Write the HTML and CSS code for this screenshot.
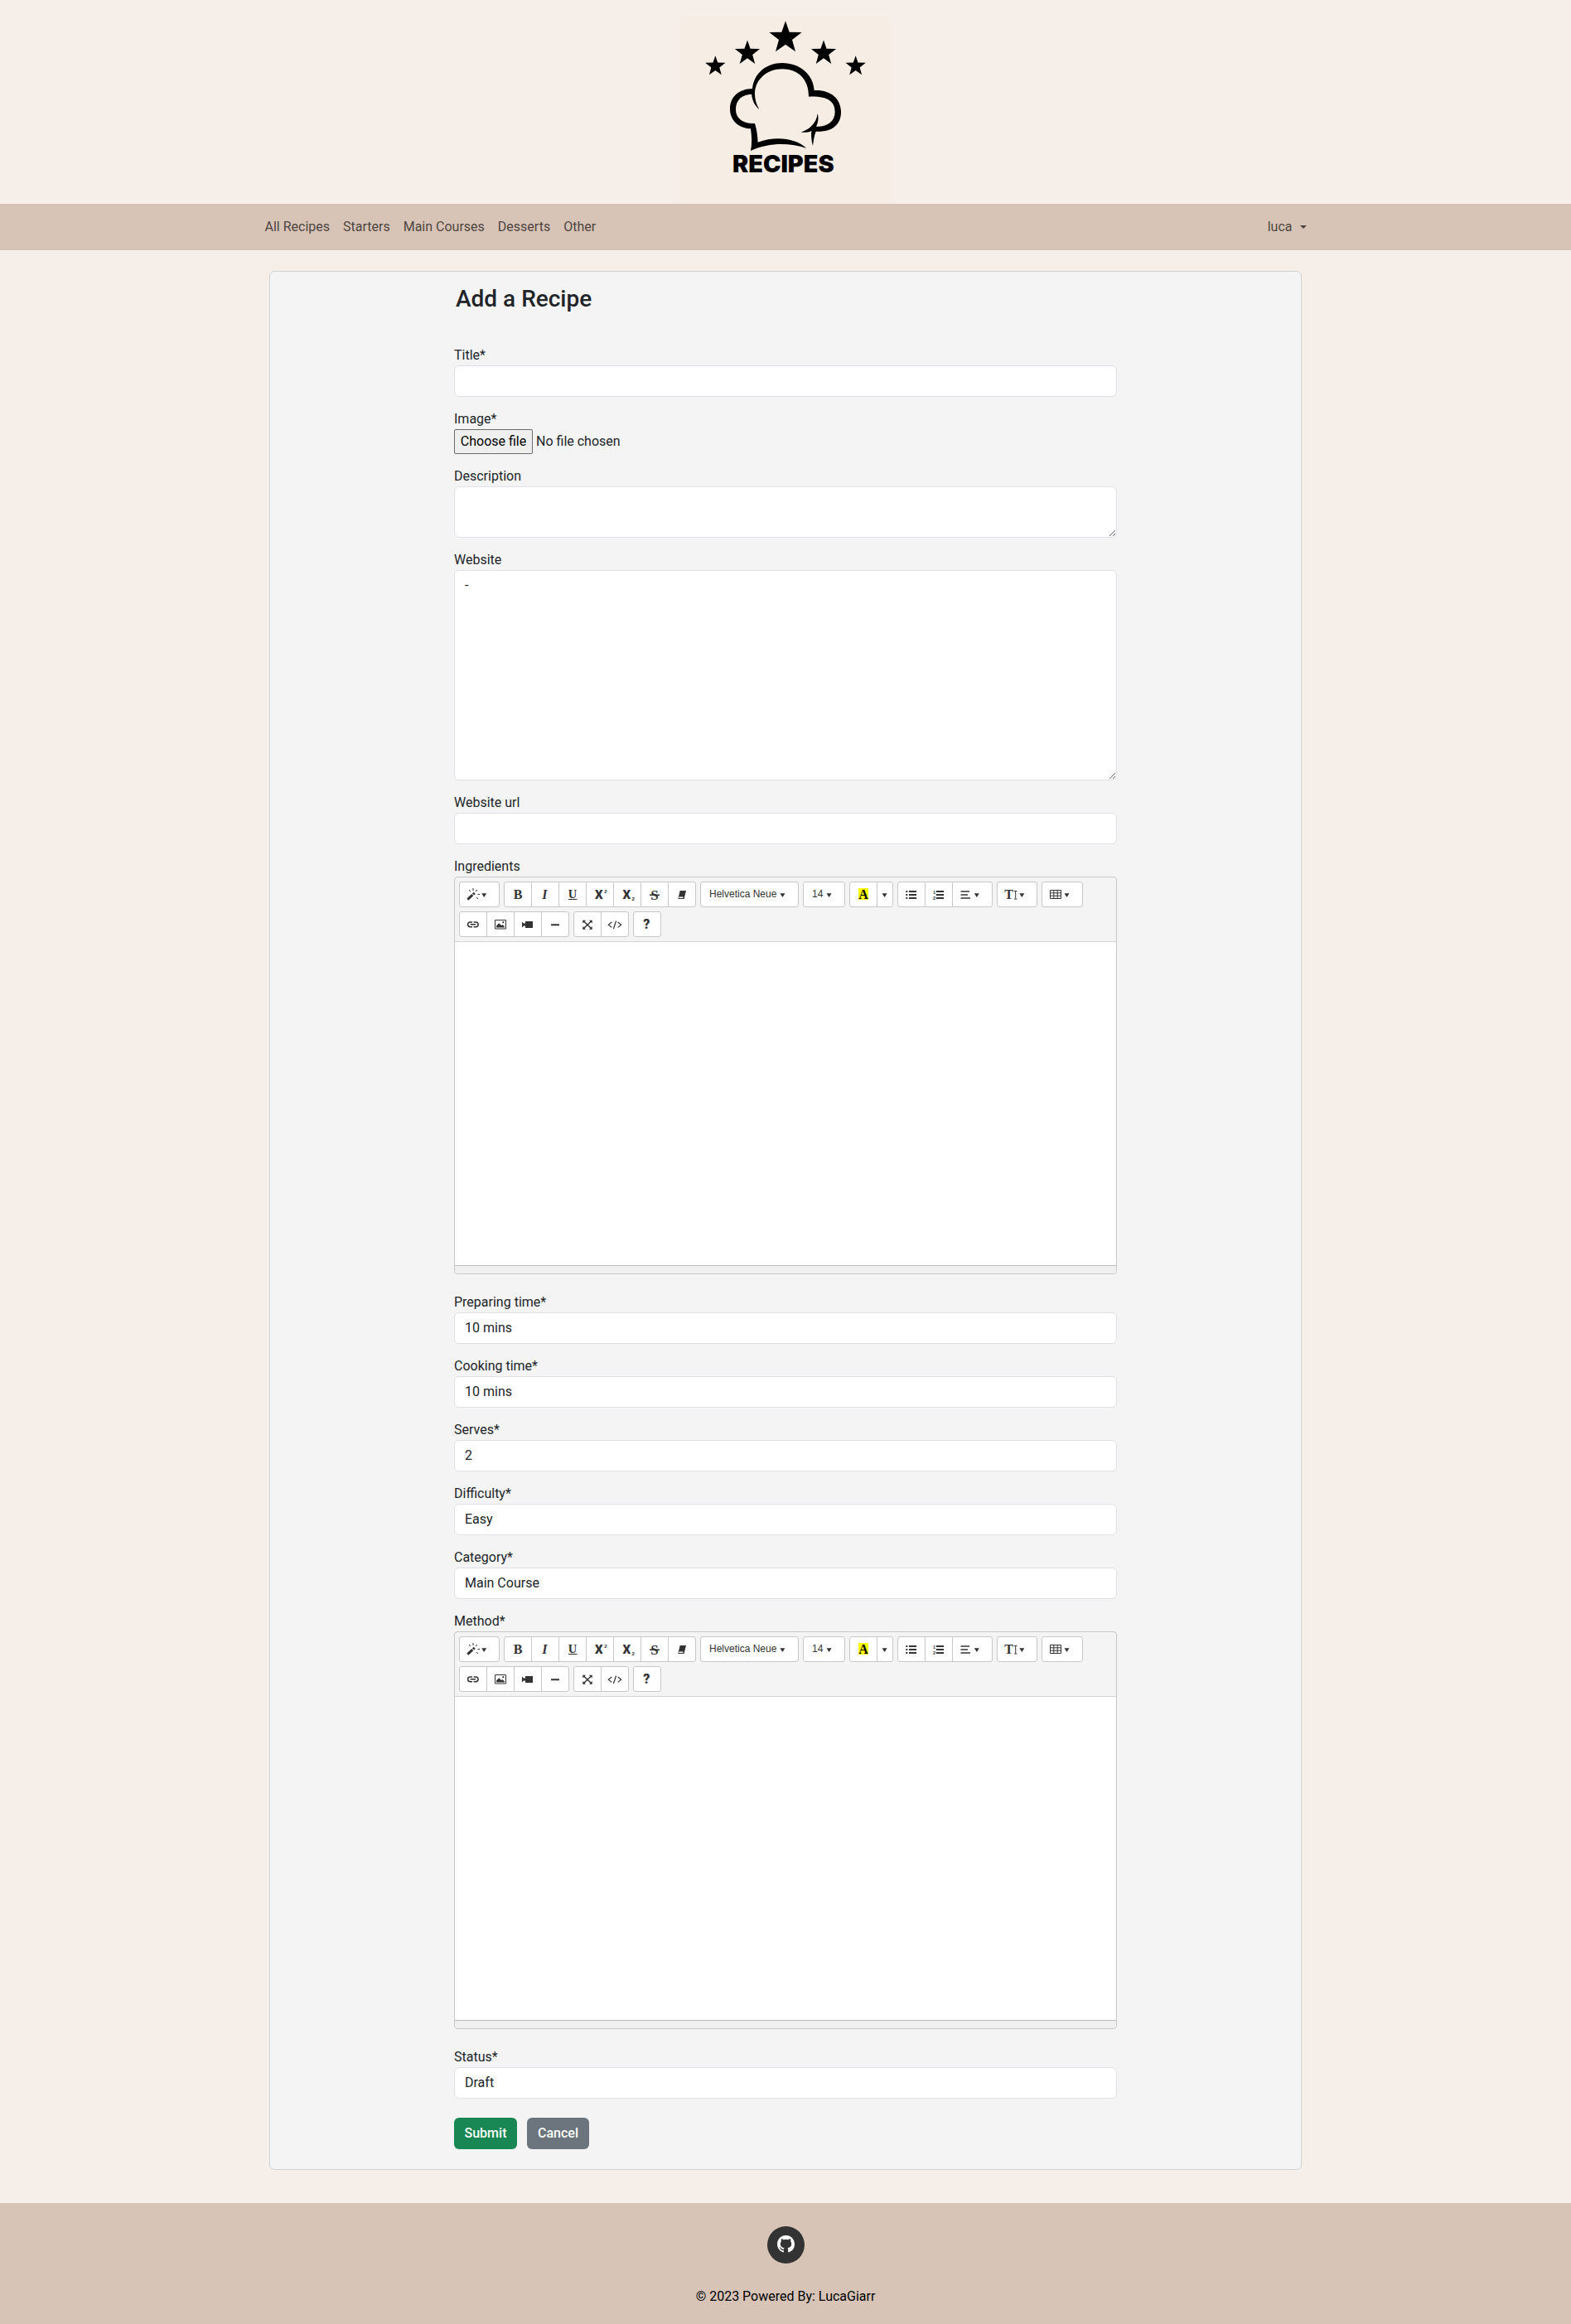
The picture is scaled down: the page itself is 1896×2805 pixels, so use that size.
FILE: index.html
```html
<!DOCTYPE html>
<html lang="en">
<head>
<meta charset="utf-8">
<title>Add a Recipe</title>
<link rel="stylesheet" href="styles.css">
</head>
<body>
<header class="site-header">
  <svg class="logo" viewBox="-6 0 780 738" role="img" aria-label="Recipes">
    <rect class="logo-bg" x="7" y="63" width="753" height="675"/>
    <defs><path id="star" d="M0-58 14-18 59-17 24 10 36 53 0 27-36 53-24 10-59-17-14-18Z"/></defs>
    <use href="#star" transform="translate(384 134)"/>
    <use href="#star" transform="translate(246 190) scale(.77)"/>
    <use href="#star" transform="translate(522 190) scale(.77)"/>
    <use href="#star" transform="translate(130 238) scale(.62)"/>
    <use href="#star" transform="translate(638 238) scale(.62)"/>
    <path d="M264 321C270 265 314 228 372 228C436 228 485 270 488 327C546 324 585 356 585 406C585 456 546 480 494 476C488 490 486 506 483 528C478 510 476 492 478 474C466 480 455 480 440 479C472 468 496 446 500 411C505 428 502 444 495 458C535 460 563 440 563 405C563 366 535 347 468 350C468 286 430 250 372 250C316 250 272 290 273 341C274 364 280 380 289 395C272 383 264 364 261 341C226 342 204 362 204 396C204 428 228 449 273 447C280 469 283 492 284 515C350 492 420 500 460 537C400 517 326 515 258 546C263 520 262 494 258 466C212 464 183 434 183 395C183 350 216 322 264 321Z"/>
    <text x="192" y="624" textLength="368" lengthAdjust="spacingAndGlyphs">RECIPES</text>
  </svg>
</header>

<nav class="navbar">
  <div class="nav-inner">
    <div class="nav-links"><a>All Recipes</a><a>Starters</a><a>Main Courses</a><a>Desserts</a><a>Other</a></div>
    <a class="user-menu">luca<span class="caret"></span></a>
  </div>
</nav>

<svg class="sprite" aria-hidden="true">
  <defs>
    <g id="caret"><path d="M-.2 0H5.8L2.8 4.6Z"/></g>
    <g id="toolbar-wand"><path d="M10.3 21.7 16.3 16.2" class="w3"/><path d="M17 15.5 18.8 13.8" class="w3"/><path d="M17 8V11M12 10 14 12M22 10 20 12M22.5 15.5H25M21 19 23 21" class="w1"/><use href="#caret" x="27.4" y="14.3"/></g>
    <g id="toolbar-bold"><text class="serif" x="11.7" y="21.3" font-size="16">B</text></g>
    <g id="toolbar-italic"><text class="serif italic" x="13.2" y="21.3" font-size="16">I</text></g>
    <g id="toolbar-underline"><text class="serif" x="11.7" y="19.5" font-size="14.5">U</text><path class="w1" d="M12 21.5H22.5"/></g>
    <g id="toolbar-sup"><text class="sans heavy" x="11" y="21" font-size="15">X</text><text class="sans" x="22.3" y="14" font-size="6">2</text></g>
    <g id="toolbar-sub"><text class="sans heavy" x="11.6" y="21" font-size="15">X</text><text class="sans" x="22.5" y="23" font-size="6">2</text></g>
    <g id="toolbar-strike"><text class="serif" x="12.2" y="21.6" font-size="17">S</text><path class="w15" d="M11 16.2H23"/></g>
    <g id="toolbar-eraser"><path d="M14.7 11H22L19.6 21H12.3Z"/><path d="M13.5 18.5H18.7L18.3 20H13.2Z" fill="#fff"/></g>
    <g id="toolbar-font"><text class="label" x="11" y="19">Helvetica Neue</text><use href="#caret" x="96.6" y="14.3"/></g>
    <g id="toolbar-size"><text class="label" x="11" y="19">14</text><use href="#caret" x="28.8" y="14.3"/></g>
    <g id="toolbar-color"><rect x="11" y="8" width="12" height="14" fill="#ff0"/><text class="serif black" x="11.2" y="21.3" font-size="16">A</text></g>
    <g id="toolbar-more"><use href="#caret" x="6.8" y="14.3"/></g>
    <g id="toolbar-ul"><path class="w2" d="M14 12H23M14 16H23M14 20H23M10.3 12H12.3M10.3 16H12.3M10.3 20H12.3"/></g>
    <g id="toolbar-ol"><path class="w2" d="M13.8 12H23M13.8 16H23M13.8 20H23"/><text class="sans" x="10" y="15" font-size="5.5">1</text><text class="sans" x="10" y="21.5" font-size="5.5">2</text></g>
    <g id="toolbar-align"><path class="w15" d="M10.5 12H21M10.5 16H19M10.5 20H22"/><use href="#caret" x="27" y="14.3"/></g>
    <g id="toolbar-height"><text class="serif" x="9.2" y="21.2" font-size="16">T</text><path class="w1" d="M22.7 12V20.5M21 11.5H24.4M21 21H24.4"/><use href="#caret" x="27.5" y="14.3"/></g>
    <g id="toolbar-table"><path class="w1" d="M10.5 10.5H23.5V20.5H10.5ZM14.8 10.5V20.5M19.2 10.5V20.5M10.5 13.8H23.5M10.5 17.2H23.5"/><use href="#caret" x="27.7" y="14.3"/></g>
    <g id="toolbar-link"><path class="w15" d="M16 12.9H13.5A2.9 2.9 0 0 0 13.5 18.7H16M17.6 12.9H20.2A2.9 2.9 0 0 1 20.2 18.7H17.6M13.7 15.8H20"/></g>
    <g id="toolbar-picture"><path class="w1" d="M10.5 10.5H23.5V21H10.5Z"/><path d="M12 19.5V17.5L15.2 14.3 18 17 19.5 16 22 18.5V19.5Z"/><circle cx="20.3" cy="13.2" r="1.1"/></g>
    <g id="toolbar-video"><path d="M14 12H23V20H14ZM10 12.5 12 14.5H14V17.5H12L10 19.5Z"/></g>
    <g id="toolbar-line"><path class="w2" d="M12 16.3H22"/></g>
    <g id="toolbar-full"><path class="w15" d="M12 11.5 22 21M22 11.5 12 21"/><path d="M11.3 10.8H15L11.3 14.4ZM22.7 10.8V14.4L19 10.8ZM11.3 21.7V18L15 21.7ZM22.7 21.7H19L22.7 18Z"/></g>
    <g id="toolbar-code"><path class="w12" d="M13.3 13 9.3 16.2 13.3 19.4M20.7 13 24.7 16.2 20.7 19.4M18.6 11.5 15.4 21"/></g>
    <g id="toolbar-help"><text class="sans heavy" x="12.2" y="21.3" font-size="16">?</text></g>
  </defs>
</svg>

<main class="card">
  <form class="recipe-form">
    <h1>Add a Recipe</h1>
    <div class="field"><label>Title*</label><input class="control" type="text"></div>
    <div class="field"><label>Image*</label><div class="file-row"><button type="button" class="file-button">Choose file</button><span>No file chosen</span></div></div>
    <div class="field"><label>Description</label><textarea class="control" rows="2"></textarea></div>
    <div class="field"><label>Website</label><textarea class="control" rows="10">-</textarea></div>
    <div class="field"><label>Website url</label><input class="control" type="text"></div>
    <div class="field editor-field"><label>Ingredients</label>
      <div class="editor">
        <div class="toolbar">
          <div class="group"><b class="wide"><svg><use href="#toolbar-wand"/></svg></b></div>
          <div class="group"><b><svg><use href="#toolbar-bold"/></svg></b><b><svg><use href="#toolbar-italic"/></svg></b><b><svg><use href="#toolbar-underline"/></svg></b><b><svg><use href="#toolbar-sup"/></svg></b><b><svg><use href="#toolbar-sub"/></svg></b><b><svg><use href="#toolbar-strike"/></svg></b><b><svg><use href="#toolbar-eraser"/></svg></b></div>
          <div class="group"><b class="font"><svg><use href="#toolbar-font"/></svg></b></div>
          <div class="group"><b class="size"><svg><use href="#toolbar-size"/></svg></b></div>
          <div class="group"><b><svg><use href="#toolbar-color"/></svg></b><b class="more"><svg><use href="#toolbar-more"/></svg></b></div>
          <div class="group"><b><svg><use href="#toolbar-ul"/></svg></b><b><svg><use href="#toolbar-ol"/></svg></b><b class="wide"><svg><use href="#toolbar-align"/></svg></b></div>
          <div class="group"><b class="wide"><svg><use href="#toolbar-height"/></svg></b></div>
          <div class="group"><b class="table"><svg><use href="#toolbar-table"/></svg></b></div>
          <div class="group"><b><svg><use href="#toolbar-link"/></svg></b><b><svg><use href="#toolbar-picture"/></svg></b><b><svg><use href="#toolbar-video"/></svg></b><b><svg><use href="#toolbar-line"/></svg></b></div>
          <div class="group"><b><svg><use href="#toolbar-full"/></svg></b><b><svg><use href="#toolbar-code"/></svg></b></div>
          <div class="group"><b><svg><use href="#toolbar-help"/></svg></b></div>
        </div>
        <div class="editable"></div>
        <div class="statusbar"></div>
      </div>
    </div>
    <div class="field"><label>Preparing time*</label><input class="control" type="text" value="10 mins"></div>
    <div class="field"><label>Cooking time*</label><input class="control" type="text" value="10 mins"></div>
    <div class="field"><label>Serves*</label><input class="control" type="text" value="2"></div>
    <div class="field"><label>Difficulty*</label><div class="control">Easy</div></div>
    <div class="field"><label>Category*</label><div class="control">Main Course</div></div>
    <div class="field editor-field"><label>Method*</label>
      <div class="editor">
        <div class="toolbar">
          <div class="group"><b class="wide"><svg><use href="#toolbar-wand"/></svg></b></div>
          <div class="group"><b><svg><use href="#toolbar-bold"/></svg></b><b><svg><use href="#toolbar-italic"/></svg></b><b><svg><use href="#toolbar-underline"/></svg></b><b><svg><use href="#toolbar-sup"/></svg></b><b><svg><use href="#toolbar-sub"/></svg></b><b><svg><use href="#toolbar-strike"/></svg></b><b><svg><use href="#toolbar-eraser"/></svg></b></div>
          <div class="group"><b class="font"><svg><use href="#toolbar-font"/></svg></b></div>
          <div class="group"><b class="size"><svg><use href="#toolbar-size"/></svg></b></div>
          <div class="group"><b><svg><use href="#toolbar-color"/></svg></b><b class="more"><svg><use href="#toolbar-more"/></svg></b></div>
          <div class="group"><b><svg><use href="#toolbar-ul"/></svg></b><b><svg><use href="#toolbar-ol"/></svg></b><b class="wide"><svg><use href="#toolbar-align"/></svg></b></div>
          <div class="group"><b class="wide"><svg><use href="#toolbar-height"/></svg></b></div>
          <div class="group"><b class="table"><svg><use href="#toolbar-table"/></svg></b></div>
          <div class="group"><b><svg><use href="#toolbar-link"/></svg></b><b><svg><use href="#toolbar-picture"/></svg></b><b><svg><use href="#toolbar-video"/></svg></b><b><svg><use href="#toolbar-line"/></svg></b></div>
          <div class="group"><b><svg><use href="#toolbar-full"/></svg></b><b><svg><use href="#toolbar-code"/></svg></b></div>
          <div class="group"><b><svg><use href="#toolbar-help"/></svg></b></div>
        </div>
        <div class="editable"></div>
        <div class="statusbar"></div>
      </div>
    </div>
    <div class="field"><label>Status*</label><div class="control">Draft</div></div>
    <div class="actions"><button type="button" class="btn submit">Submit</button><button type="button" class="btn cancel">Cancel</button></div>
  </form>
</main>

<footer class="site-footer">
  <a class="github" aria-label="GitHub"><svg viewBox="0 0 16 16"><path d="M8 0C3.58 0 0 3.58 0 8c0 3.54 2.29 6.53 5.47 7.59.4.07.55-.17.55-.38 0-.19-.01-.82-.01-1.49-2.01.37-2.53-.49-2.69-.94-.09-.23-.48-.94-.82-1.13-.28-.15-.68-.52-.01-.53.63-.01 1.08.58 1.23.82.72 1.21 1.87.87 2.33.66.07-.52.28-.87.51-1.07-1.78-.2-3.64-.89-3.64-3.95 0-.87.31-1.59.82-2.15-.08-.2-.36-1.02.08-2.12 0 0 .67-.21 2.2.82.64-.18 1.32-.27 2-.27s1.36.09 2 .27c1.53-1.04 2.2-.82 2.2-.82.44 1.1.16 1.92.08 2.12.51.56.82 1.27.82 2.15 0 3.07-1.87 3.75-3.65 3.95.29.25.54.73.54 1.48 0 1.07-.01 1.93-.01 2.2 0 .21.15.46.55.38A8.01 8.01 0 0 0 16 8c0-4.42-3.58-8-8-8Z"/></svg></a>
  <p>© 2023 Powered By: LucaGiarr</p>
</footer>
</body>
</html>
```
FILE: styles.css
```css
* { box-sizing: border-box; }
body { margin: 0; background: #f6eee8; color: #212529; font: 16px/24px Roboto, sans-serif; }
.site-header { height: 246px; display: flex; justify-content: center; }
.logo { width: 260px; height: 246px; display: block; }
.logo-bg { fill: #f6eee5; }
.logo text { font: 900 84px Inter, sans-serif; }
.navbar { height: 56px; background: #d7c4b7; color: #4f4540; }
.nav-inner { width: 1257px; height: 56px; margin: 0 auto; display: flex; justify-content: space-between; align-items: center; }
.nav-links { display: flex; gap: 16px; }
.user-menu { display: flex; align-items: center; gap: 9px; }
.caret { border: 4px solid transparent; border-top-color: currentColor; border-bottom: 0; }
.sprite { position: absolute; width: 0; height: 0; }
.card { width: 1246px; height: 2292px; margin: 25px auto 40px; background: #f4f4f4; border: 1px solid #d0d2d4; border-radius: 6px; }
.recipe-form { width: 800px; margin: 0 auto; padding-top: 16px; }
h1 { margin: 0 0 39px 2px; font-size: 28px; line-height: 34px; font-weight: 500; }
.field { margin-bottom: 15px; }
.editor-field { margin-bottom: 22px; }
label { display: block; height: 24px; }
.control { display: block; width: 100%; min-height: 38px; padding: 6px 12px; margin: 0; background: #fff; border: 1px solid #dee2e6; border-radius: 6px; color: #212529; font: inherit; }
.file-row { display: flex; height: 30px; gap: 4px; align-items: center; }
.file-button { width: 95px; height: 30px; padding: 0; background: #efefef; border: 1px solid #6b6b6b; border-radius: 2px; color: #000; font: inherit; }
.editor { height: 480px; display: flex; flex-direction: column; border: 1px solid #c8c8c8; border-radius: 4px; overflow: hidden; }
.toolbar { display: flex; flex-wrap: wrap; gap: 5px; padding: 5px 20px 5px 5px; border-bottom: 1px solid #d3d3d3; }
.group { display: flex; height: 31px; background: #fff; border: 1px solid #c8c8c8; border-radius: 3px; }
.group b { width: 33px; margin-right: -1px; border-right: 1px solid #c8c8c8; }
.group b + b { margin-left: 1px; }
.group b:last-child { width: 32px; margin-right: 0; border-right: 0; }
.group b.wide:last-child { width: 47px; }
.group b.font:last-child { width: 117px; }
.group b.size:last-child { width: 49px; }
.group b.more:last-child { width: 18px; }
.group b.table:last-child { width: 48px; }
.group svg { display: block; width: 100%; height: 31px; margin: -1px 0 0 -1px; overflow: visible; fill: #333; }
.serif { font-family: "Liberation Serif", serif; font-weight: 700; }
.italic { font-style: italic; }
.black { fill: #000; }
.sans { font-family: "Liberation Sans", sans-serif; font-weight: 700; }
.heavy { font-family: Roboto, sans-serif; font-weight: 900; }
.label { font: 400 12px "Liberation Sans", sans-serif; }
.w1, .w12, .w15, .w2, .w3 { fill: none; stroke: #333; stroke-width: 1; }
.w12 { stroke-width: 1.2; }
.w15 { stroke-width: 1.5; }
.w2 { stroke-width: 2; }
.w3 { stroke-width: 3; }
.editable { flex: 1; background: #fff; }
.statusbar { height: 10px; background: #f0f0f0; border-top: 1px solid #bdbdbd; }
.actions { display: flex; gap: 12px; padding-top: 8px; }
.btn { width: 76px; height: 38px; padding: 0; border: 0; border-radius: 6px; color: #fff; font: 500 16px/24px Roboto, sans-serif; }
.submit { background: #198754; }
.cancel { width: 75px; background: #6c757d; }
.site-footer { height: 146px; padding-top: 28px; display: flex; flex-direction: column; align-items: center; background: #d7c4b7; color: #000; }
.github { width: 45px; height: 45px; padding: 11px 12px; border-radius: 50%; background: #333; }
.github svg { display: block; width: 21px; height: 21px; fill: #fff; }
.site-footer p { margin: 28px 0 0; }
```
